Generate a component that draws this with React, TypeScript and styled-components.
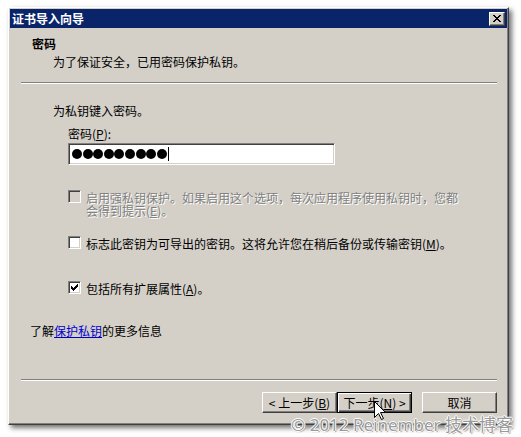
import React from "react";
import styled, { createGlobalStyle } from "styled-components";

const GlobalStyle = createGlobalStyle`
  html, body {
    margin: 0;
    padding: 0;
    background: #ffffff;
  }
  body {
    font-family: "Noto Sans CJK SC", "Noto Sans", sans-serif;
    font-size: 12px;
    color: #000;
  }
`;

const Page = styled.div`
  position: relative;
  width: 521px;
  height: 437px;
  overflow: hidden;
  padding: 7px 0 0 8px;
  box-sizing: border-box;
`;

const Window = styled.div`
  width: 501px;
  height: 418px;
  box-sizing: border-box;
  display: flex;
  flex-direction: column;
  background: #d4d0c8;
  border: 1px solid;
  border-color: #ffffff #404040 #404040 #ffffff;
  padding: 1px;
  box-shadow: inset -1px -1px 0 #808080, 3px 3px 5px rgba(0, 0, 0, 0.55);
`;

const TitleBar = styled.div`
  height: 19px;
  flex: none;
  display: flex;
  align-items: center;
  justify-content: space-between;
  padding: 0 2px 0 2px;
  background: #0a246a;
`;

const Title = styled.span`
  color: #ffffff;
  font-weight: bold;
  font-size: 12px;
  line-height: 19px;
`;

const CloseButton = styled.div`
  width: 16px;
  height: 14px;
  box-sizing: border-box;
  display: flex;
  align-items: center;
  justify-content: center;
  background: #d4d0c8;
  border: 1px solid;
  border-color: #ffffff #404040 #404040 #ffffff;
  box-shadow: inset -1px -1px 0 #808080;
`;

const Header = styled.div`
  height: 54px;
  flex: none;
  box-sizing: border-box;
  padding: 9px 0 0 22px;
`;

const Heading = styled.div`
  font-weight: bold;
  line-height: 14px;
`;

const SubTitle = styled.div`
  line-height: 14px;
  margin: 4px 0 0 21px;
`;

const Separator = styled.div`
  flex: none;
  height: 0;
  margin: 0 10px 0 11px;
  border-top: 1px solid #808080;
  border-bottom: 1px solid #ffffff;
`;

const Body = styled.div`
  flex: 1;
  display: flex;
  flex-direction: column;
  padding: 20px 0 0 43px;
`;

const Line = styled.div<{ $indent?: number; $top?: number }>`
  line-height: 14px;
  margin-left: ${(p) => p.$indent ?? 0}px;
  margin-top: ${(p) => p.$top ?? 0}px;
`;

const PasswordBox = styled.div`
  width: 267px;
  height: 22px;
  box-sizing: border-box;
  margin: 2px 0 0 15px;
  display: flex;
  align-items: center;
  padding-left: 3px;
  background: #ffffff;
  border: 1px solid;
  border-color: #808080 #ffffff #ffffff #808080;
  box-shadow: inset 1px 1px 0 #404040, inset -1px -1px 0 #d4d0c8;
`;

const Dot = styled.span`
  width: 10px;
  height: 10px;
  border-radius: 50%;
  background: #000;
  margin-right: 0.6px;
`;

const Caret = styled.span`
  width: 1px;
  height: 14px;
  background: #000;
  margin-left: 1px;
`;

const CheckRow = styled.div<{ $top: number }>`
  display: flex;
  align-items: flex-start;
  gap: 5px;
  margin: ${(p) => p.$top}px 0 0 15px;
`;

const Box = styled.div<{ $disabled?: boolean }>`
  width: 13px;
  height: 13px;
  flex: none;
  box-sizing: border-box;
  display: flex;
  align-items: center;
  justify-content: center;
  background: ${(p) => (p.$disabled ? "#d4d0c8" : "#ffffff")};
  border: 1px solid;
  border-color: #808080 #ffffff #ffffff #808080;
  box-shadow: inset 1px 1px 0 #404040, inset -1px -1px 0 #d4d0c8;
`;

const CheckText = styled.div<{ $disabled?: boolean }>`
  line-height: 13px;
  padding-top: 1px;
  color: ${(p) => (p.$disabled ? "#808080" : "#000")};
  text-shadow: ${(p) => (p.$disabled ? "1px 1px 0 #ffffff" : "none")};
`;

const Key = styled.span`
  text-decoration: underline;
`;

const Link = styled.a`
  color: #0000cc;
  text-decoration: underline;
`;

const Footer = styled.div`
  height: 42px;
  flex: none;
  box-sizing: border-box;
  display: flex;
  justify-content: flex-end;
  padding: 11px 10px 0 0;
`;

const Button = styled.div<{ $default?: boolean; $gap?: number }>`
  width: 75px;
  height: 21px;
  box-sizing: border-box;
  display: flex;
  align-items: center;
  justify-content: center;
  margin-left: ${(p) => p.$gap ?? 0}px;
  line-height: 14px;
  background: #d4d0c8;
  border: 1px solid;
  border-color: ${(p) =>
    p.$default ? "#000000" : "#ffffff #404040 #404040 #ffffff"};
  box-shadow: ${(p) =>
    p.$default
      ? "inset 1px 1px 0 #ffffff, inset -1px -1px 0 #404040, inset -2px -2px 0 #808080"
      : "inset -1px -1px 0 #808080"};
`;

const Cursor = styled.svg`
  position: absolute;
  left: 374px;
  top: 401px;
`;

const Watermark = styled.div`
  position: absolute;
  right: 8px;
  bottom: 2px;
  font-family: "Noto Sans", "Noto Sans CJK SC", sans-serif;
  font-size: 17px;
  line-height: 20px;
  color: #9a9a9a;
  text-shadow: 1px 0 0 #ffffff, -1px 0 0 #ffffff, 0 1px 0 #ffffff,
    0 -1px 0 #ffffff, 1px 1px 1px #707070;
  white-space: nowrap;
`;

const CloseGlyph = () => (
  <svg width="8" height="7" viewBox="0 0 8 7" shapeRendering="crispEdges">
    <path
      d="M0 0h2v1H0zM6 0h2v1H6zM1 1h2v1H1zM5 1h2v1H5zM2 2h4v1H2zM3 3h2v1H3zM2 4h4v1H2zM1 5h2v1H1zM5 5h2v1H5zM0 6h2v1H0zM6 6h2v1H6z"
      fill="#000"
    />
  </svg>
);

const Tick = () => (
  <svg width="7" height="7" viewBox="0 0 7 7" shapeRendering="crispEdges">
    <path
      d="M6 0h1v1H6zM5 1h2v1H5zM0 2h1v1H0zM4 2h3v1H4zM0 3h2v1H0zM3 3h3v1H3zM0 4h5v1H0zM1 5h3v1H1zM2 6h1v1H2z"
      fill="#000"
    />
  </svg>
);

export default function App() {
  return (
    <>
      <GlobalStyle />
      <Page>
        <Window>
          <TitleBar>
            <Title>证书导入向导</Title>
            <CloseButton>
              <CloseGlyph />
            </CloseButton>
          </TitleBar>
          <Header>
            <Heading>密码</Heading>
            <SubTitle>为了保证安全，已用密码保护私钥。</SubTitle>
          </Header>
          <Separator />
          <Body>
            <Line>为私钥键入密码。</Line>
            <Line $indent={15} $top={9}>
              密码(<Key>P</Key>):
            </Line>
            <PasswordBox>
              {Array.from({ length: 9 }).map((_, i) => (
                <Dot key={i} />
              ))}
              <Caret />
            </PasswordBox>
            <CheckRow $top={25}>
              <Box $disabled />
              <CheckText $disabled>
                启用强私钥保护。如果启用这个选项，每次应用程序使用私钥时，您都
                <br />
                会得到提示(<Key>E</Key>)。
              </CheckText>
            </CheckRow>
            <CheckRow $top={19}>
              <Box />
              <CheckText>
                标志此密钥为可导出的密钥。这将允许您在稍后备份或传输密钥(<Key>M</Key>)。
              </CheckText>
            </CheckRow>
            <CheckRow $top={31}>
              <Box>
                <Tick />
              </Box>
              <CheckText>
                包括所有扩展属性(<Key>A</Key>)。
              </CheckText>
            </CheckRow>
            <Line $indent={-23} $top={29}>
              了解<Link>保护私钥</Link>的更多信息
            </Line>
          </Body>
          <Separator />
          <Footer>
            <Button>
              &lt; 上一步(<Key>B</Key>)
            </Button>
            <Button $default>
              下一步(<Key>N</Key>) &gt;
            </Button>
            <Button $gap={10}>取消</Button>
          </Footer>
        </Window>
        <Cursor width="13" height="20" viewBox="0 0 13 20">
          <path
            d="M0.5 0.5 L0.5 16.5 L4.5 12.5 L7.5 18.5 L9.5 17.5 L6.5 11.5 L11.5 11.5 Z"
            fill="#ffffff"
            stroke="#000000"
            strokeWidth="1"
          />
        </Cursor>
        <Watermark>© 2012 Reinember 技术博客</Watermark>
      </Page>
    </>
  );
}
